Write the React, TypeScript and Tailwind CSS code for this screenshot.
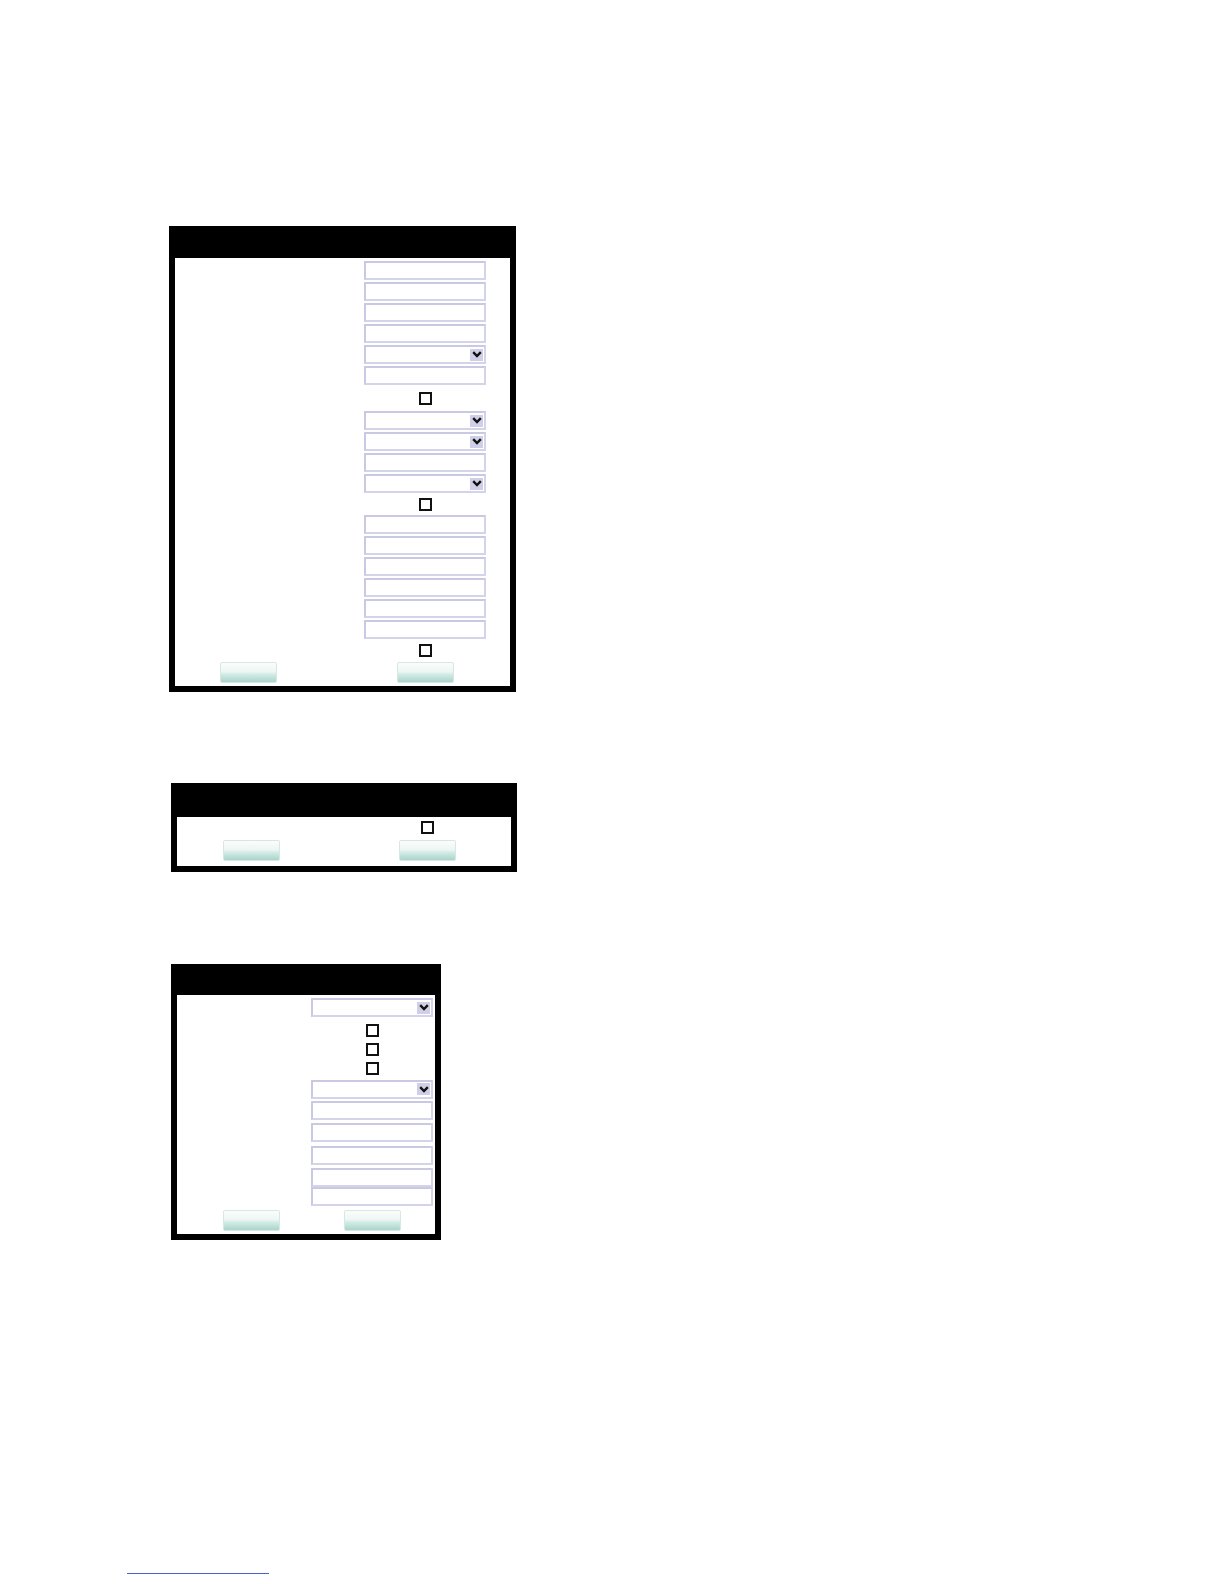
import React from 'react';

type Row =
  | { kind: 'input'; h: number }
  | { kind: 'select'; h: number }
  | { kind: 'check'; h: number };

function TextBox() {
  return <div className="h-[19px] w-[122px] border-2 border-[#d3d3ea] border-l-[#c9c9e4] border-t-[#c9c9e4] bg-white" />;
}

function SelectBox() {
  return (
    <div className="flex h-[19px] w-[122px] items-center justify-end border-2 border-[#d3d3ea] border-l-[#c9c9e4] border-t-[#c9c9e4] bg-white pr-[1px]">
      <div className="flex h-[12px] w-[13px] items-center justify-center bg-[#cfd0e8]">
        <svg width="10" height="7" viewBox="0 0 10 7">
          <path d="M1.2 1.2 L5 5 L8.8 1.2" fill="none" stroke="#111" strokeWidth="2.4" />
        </svg>
      </div>
    </div>
  );
}

function CheckBox() {
  return (
    <div className="flex w-[122px] justify-center">
      <div className="h-[13px] w-[13px] border-2 border-[#111] border-t-[2.5px] bg-white" />
    </div>
  );
}

function Btn() {
  return (
    <div className="h-[21px] w-[57px] rounded-[2px] border border-[#d6e8e3] bg-[linear-gradient(to_bottom,#fbfdfc_0%,#eef6f4_45%,#d3ebe5_60%,#a8d5ca_100%)]" />
  );
}

function Panel({
  width,
  header,
  rows,
  padTop,
  colRight,
  btnLeft,
  btnRowH,
  btnTop,
}: {
  width: number;
  header: number;
  rows: Row[];
  padTop: number;
  colRight: number;
  btnLeft: number;
  btnRowH: number;
  btnTop: number;
}) {
  return (
    <div className="bg-black px-[6px] pb-[6px]" style={{ width, paddingTop: header }}>
      <div className="bg-white" style={{ paddingTop: padTop }}>
        {rows.map((r, i) => (
          <div key={i} className="flex items-center justify-end" style={{ height: r.h, paddingRight: colRight }}>
            {r.kind === 'input' && <TextBox />}
            {r.kind === 'select' && <SelectBox />}
            {r.kind === 'check' && <CheckBox />}
          </div>
        ))}
        <div className="flex items-start justify-between" style={{ height: btnRowH, paddingTop: btnTop }}>
          <div style={{ marginLeft: btnLeft }}>
            <Btn />
          </div>
          <div className="flex w-[122px] justify-center" style={{ marginRight: colRight }}>
            <Btn />
          </div>
        </div>
      </div>
    </div>
  );
}

const I = (h = 21): Row => ({ kind: 'input', h });
const S = (h = 21): Row => ({ kind: 'select', h });
const C = (h = 20): Row => ({ kind: 'check', h });

export default function App() {
  const rows1: Row[] = [I(), I(), I(), I(), S(), I(), C(24), S(), S(), I(), S(), C(20), I(), I(), I(), I(), I(), I(), C(20)];
  const rows2: Row[] = [C(21)];
  const rows3: Row[] = [S(25), C(20), C(19), C(19), S(22), I(21), I(22), I(24), I(20), I(19)];

  return (
    <div className="relative min-h-[1584px] w-[1224px] bg-white font-['Liberation_Sans',sans-serif]">
      <div className="pt-[226px]">
        <div className="ml-[169px]">
          <Panel width={347} header={32} rows={rows1} padTop={2} colRight={24} btnLeft={45} btnRowH={26} btnTop={2} />
        </div>
        <div className="ml-[171px] mt-[91px]">
          <Panel width={346} header={34} rows={rows2} padTop={0} colRight={23} btnLeft={46} btnRowH={28} btnTop={2} />
        </div>
        <div className="ml-[171px] mt-[92px]">
          <Panel width={270} header={31} rows={rows3} padTop={0} colRight={2} btnLeft={46} btnRowH={28} btnTop={4} />
        </div>
      </div>
      <div className="absolute left-[127px] top-[1573px] h-px w-[142px] bg-[#4a5fd0]" />
    </div>
  );
}
